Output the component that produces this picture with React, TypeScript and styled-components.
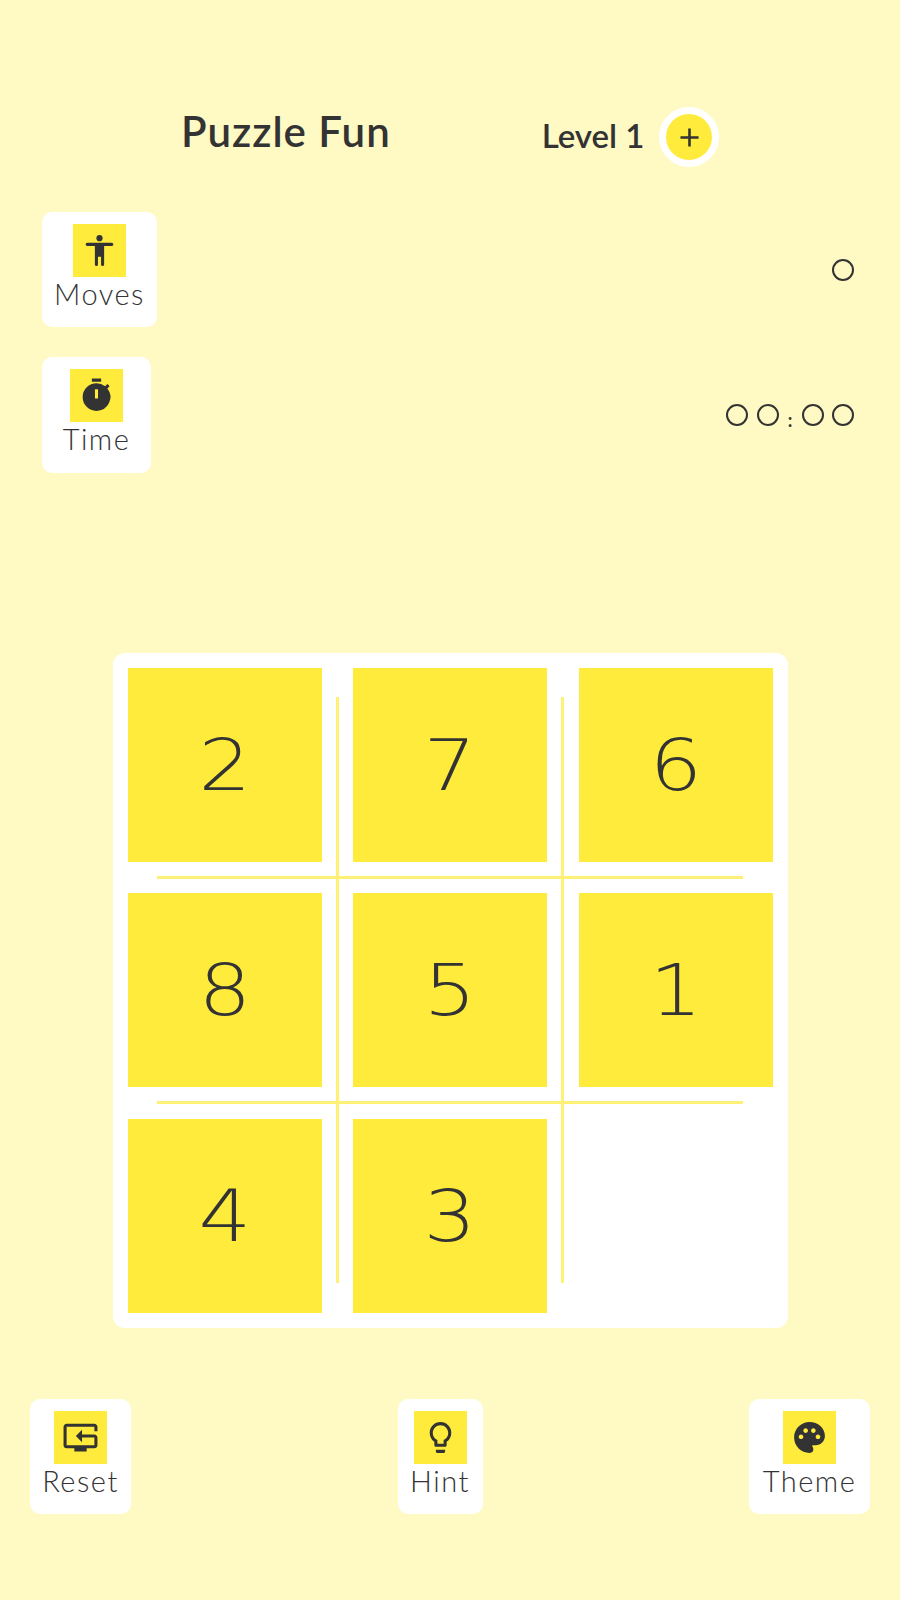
import React from 'react'
import styled, { createGlobalStyle } from 'styled-components'
import { MdAdd, MdLightbulbOutline, MdPalette, MdResetTv, MdTimer } from 'react-icons/md'

const colors = {
  page: '#FFF9C4',
  tile: '#FFEB3B',
  line: '#FFF176',
  ink: '#333333',
  white: '#FFFFFF'
}

const GlobalStyle = createGlobalStyle`
  * { box-sizing: border-box; }
  html, body {
    margin: 0;
    background: ${colors.page};
  }
`

const Page = styled.div`
  display: flex;
  flex-direction: column;
  height: 1600px;
  overflow: hidden;
  padding-top: 107px;
  background: ${colors.page};
  color: ${colors.ink};
  font-family: Lato, "Noto Sans", sans-serif;
`

const Header = styled.header`
  display: flex;
  align-items: center;
  height: 60px;
  padding-left: 181px;
`

const Title = styled.h1`
  margin: 0 0 13px;
  font-size: 42px;
  font-weight: 600;
  letter-spacing: 1px;
  line-height: 1;
`

const Level = styled.div`
  margin: 0 0 4px 151px;
  font-size: 33px;
  font-weight: 600;
  line-height: 1;
`

const LevelUp = styled.button`
  display: flex;
  align-items: center;
  justify-content: center;
  width: 60px;
  height: 60px;
  margin-left: 15px;
  padding: 0;
  border: 7.5px solid ${colors.white};
  border-radius: 50%;
  background: ${colors.tile};
  color: ${colors.ink};
  font-size: 31px;
`

const Stats = styled.section`
  display: flex;
  flex-direction: column;
  gap: 30px;
  margin-top: 45px;
  padding: 0 46px 0 42px;
`

const StatRow = styled.div`
  display: flex;
  align-items: center;
  justify-content: space-between;
`

const Card = styled.div<{ $width: number }>`
  display: flex;
  flex-direction: column;
  align-items: center;
  width: ${({ $width }) => $width}px;
  height: 115.33px;
  padding-top: 12px;
  border-radius: 10px;
  background: ${colors.white};
`

const IconBox = styled.div`
  display: flex;
  align-items: center;
  justify-content: center;
  width: 53px;
  height: 53px;
  background: ${colors.tile};
  font-size: 37px;
  color: ${colors.ink};
`

const Label = styled.span`
  font-size: 29px;
  font-weight: 300;
  line-height: 34px;
  letter-spacing: 1.5px;
  white-space: nowrap;
`

const Counter = styled.div`
  display: flex;
  align-items: center;
  gap: 8.5px;
`

const Digit = styled.span`
  display: block;
  width: 22px;
  height: 22px;
  border: 2px solid ${colors.ink};
  border-radius: 50%;
  color: transparent;
  font-size: 12px;
  line-height: 18px;
  text-align: center;
`

const Colon = styled.span`
  width: 6px;
  margin-top: 10px;
  font-size: 18px;
  font-weight: 700;
  line-height: 1;
  text-align: center;
`

const Board = styled.section`
  position: relative;
  display: grid;
  grid-template-columns: repeat(3, 194px);
  grid-auto-rows: 194px;
  gap: 31.5px;
  width: 675px;
  margin: 180px auto 0;
  padding: 15px;
  border-radius: 12px;
  background: ${colors.white};
`

const Tile = styled.div`
  display: flex;
  align-items: center;
  justify-content: center;
  background: ${colors.tile};
  font-family: "DejaVu Sans", Lato, sans-serif;
  font-size: 72px;
  font-weight: 200;
  line-height: 1;
`

// the numerals on the tiles are set a little wider than the face draws them
const TileNumber = styled.span`
  display: block;
  transform: scaleX(1.15);
`

// thin rules between the tiles, lying over the board
const Rule = styled.i<{ $at: number; $vertical?: boolean }>`
  position: absolute;
  background: ${colors.line};
  ${({ $at, $vertical }) =>
    $vertical
      ? `left: ${$at}px; top: 44px; bottom: 45px; width: 3px;`
      : `top: ${$at}px; left: 44px; right: 45px; height: 3px;`}
`

const Footer = styled.footer`
  display: flex;
  justify-content: space-between;
  margin-top: 71px;
  padding: 0 30px;
`

const PersonIcon = () => (
  <svg width="37" height="37" viewBox="0 0 24 24" fill="currentColor">
    <circle cx="12" cy="4" r="2" />
    <path d="M4 7h16a1 1 0 0 1 0 2h-5v12a1 1 0 0 1-2 0v-5h-2v5a1 1 0 0 1-2 0V9H4a1 1 0 0 1 0-2z" />
  </svg>
)

const tiles = [2, 7, 6, 8, 5, 1, 4, 3]

export default function App() {
  return (
    <Page>
      <GlobalStyle />
      <Header>
        <Title>Puzzle Fun</Title>
        <Level>Level 1</Level>
        <LevelUp aria-label="Next level"><MdAdd /></LevelUp>
      </Header>

      <Stats>
        <StatRow>
          <Card $width={115}>
            <IconBox><PersonIcon /></IconBox>
            <Label>Moves</Label>
          </Card>
          <Counter>
            <Digit>0</Digit>
          </Counter>
        </StatRow>
        <StatRow>
          <Card $width={109}>
            <IconBox><MdTimer /></IconBox>
            <Label>Time</Label>
          </Card>
          <Counter>
            <Digit>0</Digit>
            <Digit>0</Digit>
            <Colon>:</Colon>
            <Digit>0</Digit>
            <Digit>0</Digit>
          </Counter>
        </StatRow>
      </Stats>

      <Board>
        {tiles.map((n) => <Tile key={n}><TileNumber>{n}</TileNumber></Tile>)}
        <Rule $vertical $at={223.5} />
        <Rule $vertical $at={448.5} />
        <Rule $at={223} />
        <Rule $at={448} />
      </Board>

      <Footer>
        <Card $width={101}>
          <IconBox><MdResetTv /></IconBox>
          <Label>Reset</Label>
        </Card>
        <Card $width={85}>
          <IconBox><MdLightbulbOutline /></IconBox>
          <Label>Hint</Label>
        </Card>
        <Card $width={121}>
          <IconBox><MdPalette /></IconBox>
          <Label>Theme</Label>
        </Card>
      </Footer>
    </Page>
  )
}
